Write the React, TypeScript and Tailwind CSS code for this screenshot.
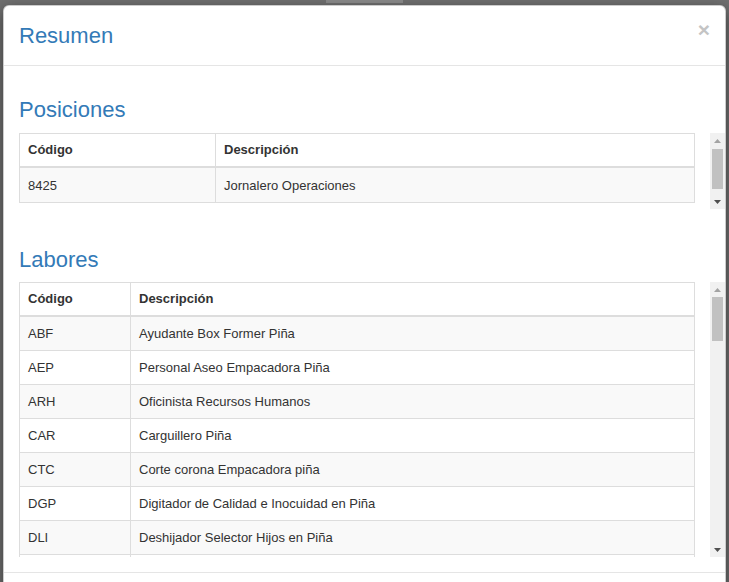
import React from "react";

type Row = { code: string; desc: string };

const posiciones: Row[] = [{ code: "8425", desc: "Jornalero Operaciones" }];

const labores: Row[] = [
  { code: "ABF", desc: "Ayudante Box Former Piña" },
  { code: "AEP", desc: "Personal Aseo Empacadora Piña" },
  { code: "ARH", desc: "Oficinista Recursos Humanos" },
  { code: "CAR", desc: "Carguillero Piña" },
  { code: "CTC", desc: "Corte corona Empacadora piña" },
  { code: "DGP", desc: "Digitador de Calidad e Inocuidad en Piña" },
  { code: "DLI", desc: "Deshijador Selector Hijos en Piña" },
  { code: "", desc: "" },
];

function UpArrow({ color }: { color: string }) {
  return (
    <svg width="7" height="4" viewBox="0 0 7 4">
      <polygon points="3.5,0 7,4 0,4" fill={color} />
    </svg>
  );
}

function DownArrow({ color }: { color: string }) {
  return (
    <svg width="7" height="4" viewBox="0 0 7 4">
      <polygon points="0,0 7,0 3.5,4" fill={color} />
    </svg>
  );
}

function Table({ rows, first }: { rows: Row[]; first: "pos" | "lab" }) {
  const cols = first === "pos" ? "grid-cols-[196px_1fr]" : "grid-cols-[111px_1fr]";
  return (
    <div className="border border-[#dddddd] text-[13px] text-[#333333]">
      <div className={`grid ${cols} h-[34px] border-b-2 border-[#dddddd] font-bold`}>
        <div className="flex items-center border-r border-[#dddddd] px-[8px]">Código</div>
        <div className="flex items-center px-[8px]">Descripción</div>
      </div>
      {rows.map((r, i) => (
        <div
          key={i}
          className={`grid ${cols} h-[34px] ${i < rows.length - 1 ? "border-b border-[#dddddd]" : ""} ${
            i % 2 === 0 ? "bg-[#f9f9f9]" : "bg-white"
          }`}
        >
          <div className="flex items-center border-r border-[#dddddd] px-[8px] pt-[1px]">{r.code}</div>
          <div className="flex items-center px-[8px] pt-[1px]">{r.desc}</div>
        </div>
      ))}
    </div>
  );
}

export default function App() {
  return (
    <div
      className="relative h-[582px] w-[729px] overflow-hidden bg-[#707070] pl-[3px] pt-[5px]"
      style={{ fontFamily: '"Liberation Sans", Arial, Helvetica, sans-serif' }}
    >
      <div className="absolute left-[326px] top-0 h-[3px] w-[77px] bg-[#8c8c8c]" />
      <div className="relative w-[723px] h-[620px] rounded-[6px] border border-[rgba(0,0,0,0.2)] bg-white shadow-[0_5px_15px_rgba(0,0,0,0.5)]">
        {/* header */}
        <div className="flex items-start justify-between border-b border-[#e5e5e5] px-[15px] pt-[15px] pb-[15px]">
          <h4 className="text-[22px] leading-[29px] text-[#337ab7]">Resumen</h4>
          <span className="-mt-[2px] text-[21px] font-bold leading-[21px] text-[#c4c4c4]">×</span>
        </div>
        {/* body */}
        <div className="pl-[15px] pt-[15px] pb-[15px]">
          <h3 className="mt-[17px] mb-[11px] text-[22px] leading-[24px] text-[#337ab7]">Posiciones</h3>
          <div className="flex h-[76px]">
            <div className="flex-1 overflow-hidden pr-[15px]">
              <Table rows={posiciones} first="pos" />
            </div>
            <div className="flex w-[15px] flex-col bg-[#f1f1f1]">
              <div className="flex h-[15px] items-center justify-center">
                <UpArrow color="#a3a3a3" />
              </div>
              <div className="flex-1">
                <div className="mx-[2px] mt-[1px] h-[40px] bg-[#c1c1c1]" />
              </div>
              <div className="flex h-[15px] items-center justify-center">
                <DownArrow color="#505050" />
              </div>
            </div>
          </div>

          <h3 className="mt-[39px] mb-[10px] text-[22px] leading-[24px] text-[#337ab7]">Labores</h3>
          <div className="flex h-[275px]">
            <div className="flex-1 overflow-hidden pr-[15px]">
              <Table rows={labores} first="lab" />
            </div>
            <div className="flex w-[15px] flex-col bg-[#f1f1f1]">
              <div className="flex h-[15px] items-center justify-center">
                <UpArrow color="#a3a3a3" />
              </div>
              <div className="flex-1">
                <div className="mx-[2px] mt-[0px] h-[44px] bg-[#c1c1c1]" />
              </div>
              <div className="flex h-[15px] items-center justify-center">
                <DownArrow color="#505050" />
              </div>
            </div>
          </div>
        </div>
        {/* footer */}
        <div className="h-[60px] border-t border-[#e5e5e5]" />
      </div>
    </div>
  );
}
